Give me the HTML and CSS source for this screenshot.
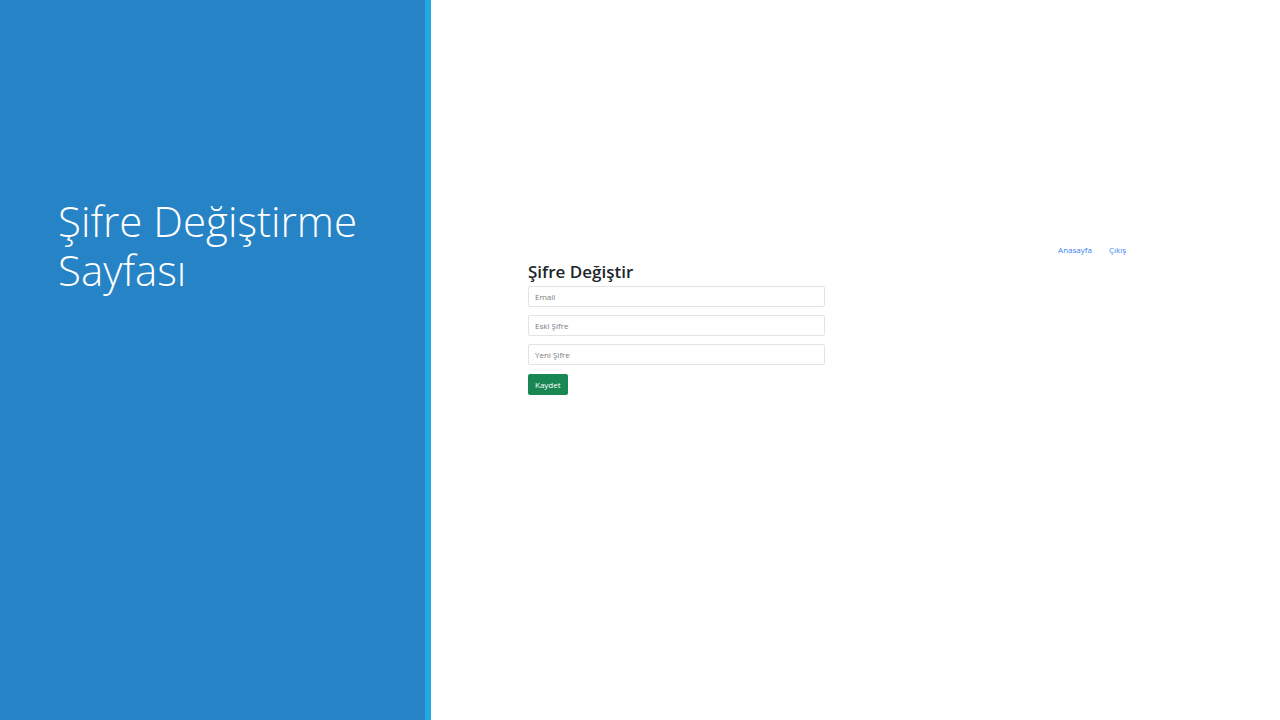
FILE: index.html
```html
<!DOCTYPE html>
<html lang="tr">
<head>
<meta charset="utf-8">
<title>Şifre Değiştirme Sayfası</title>
<link rel="stylesheet" href="styles.css">
</head>
<body>
<div class="slide">
  <aside class="panel">
    <h1 class="panel-title">Şifre Değiştirme Sayfası</h1>
  </aside>
  <main class="content">
    <nav class="nav">
      <a class="nav-link" href="#">Anasayfa</a>
      <a class="nav-link" href="#">Çıkış</a>
    </nav>
    <form class="form">
      <h2 class="form-title">Şifre Değiştir</h2>
      <div class="fields">
        <input class="field" type="email" placeholder="Email" aria-label="Email">
        <input class="field" type="password" placeholder="Eski Şifre" aria-label="Eski Şifre">
        <input class="field" type="password" placeholder="Yeni Şifre" aria-label="Yeni Şifre">
      </div>
      <button class="save" type="button">Kaydet</button>
    </form>
  </main>
</div>
</body>
</html>
```

FILE: styles.css
```css
* {
  box-sizing: border-box;
}

body {
  margin: 0;
  background: #ffffff;
  font-family: "Open Sans", "Noto Sans", sans-serif;
}

.slide {
  display: grid;
  grid-template-columns: 431px 1fr;
  min-height: 100vh;
}

.panel {
  padding: 196px 48px 0 58px;
  border-right: 6px solid #21a9e0;
  background: #2683c6;
}

.panel-title {
  margin: 0;
  color: #ffffff;
  font-size: 42px;
  font-weight: 300;
  line-height: 49px;
}

.content {
  padding: 243px 154px 0 97px;
}

.nav {
  display: flex;
  justify-content: flex-end;
  gap: 17px;
}

.nav-link {
  color: #3d80f5;
  font-size: 8px;
  line-height: 13px;
  text-decoration: none;
}

.form {
  width: 50%;
  padding: 4px 2px 0 0;
}

.form-title {
  margin: 0 0 2px;
  color: #212529;
  font-size: 17px;
  font-weight: 600;
  line-height: 24px;
}

.fields {
  display: grid;
  gap: 8px;
  margin-bottom: 9px;
}

.field {
  width: 100%;
  height: 21px;
  padding: 0 6px;
  border: 1px solid #dfe4e6;
  border-radius: 2px;
  background: #ffffff;
  color: #212529;
  font-family: inherit;
  font-size: 8px;
}

.field::placeholder {
  color: #757b81;
  opacity: 1;
}

.save {
  display: block;
  height: 21px;
  padding: 0 7px;
  border: 0;
  border-radius: 2px;
  background: #198754;
  color: #ffffff;
  font-family: inherit;
  font-size: 8px;
}
```
